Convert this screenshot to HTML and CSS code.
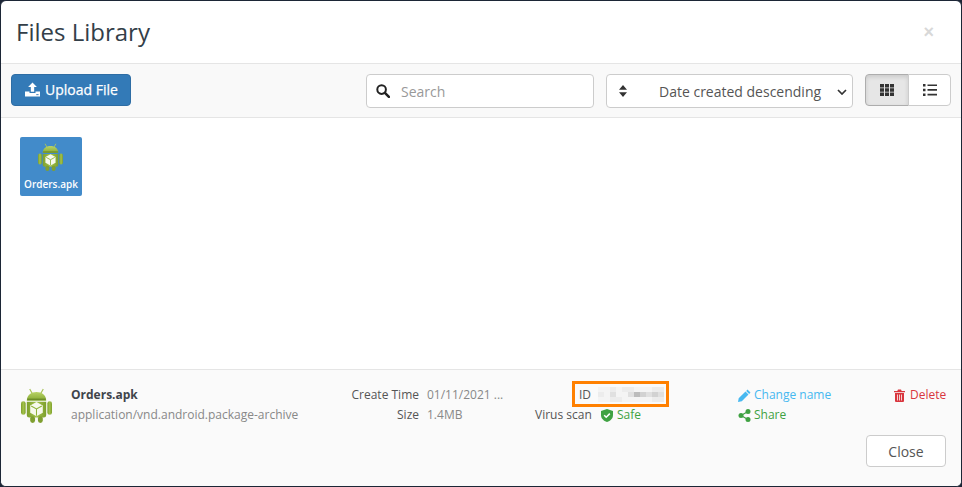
FILE: index.html
```html
<!DOCTYPE html>
<html lang="en">
<head>
<meta charset="utf-8">
<title>Files Library</title>
<link rel="stylesheet" href="styles.css">
</head>
<body>
<svg class="defs" width="0" height="0" aria-hidden="true">
  <defs>
    <linearGradient id="droid-head" x1="0" y1="0" x2="0" y2="1">
      <stop offset="0" stop-color="#b9d366"/>
      <stop offset="1" stop-color="#84a932"/>
    </linearGradient>
    <linearGradient id="droid-body" x1="0" y1="0" x2="1" y2="0">
      <stop offset="0" stop-color="#7d9f2c"/>
      <stop offset=".5" stop-color="#a3c24a"/>
      <stop offset="1" stop-color="#7d9f2c"/>
    </linearGradient>
  </defs>
  <symbol id="android" viewBox="0 0 32 36">
    <path d="M9 1l2.500 4.500M23 1l-2.500 4.500" stroke="#a9c45a" stroke-width="1.200" fill="none"/>
    <path d="M6 13C6 7 10.500 4 16 4s10 3 10 9z" fill="url(#droid-head)"/>
    <path d="M6.500 11.500h19" stroke="#5f7f22" stroke-width="1"/>
    <rect x="0" y="13.500" width="4.800" height="14" rx="2.400" fill="url(#droid-body)"/>
    <rect x="27.200" y="13.500" width="4.800" height="14" rx="2.400" fill="url(#droid-body)"/>
    <path d="M6 14h20v14a2.500 2.500 0 0 1-2.500 2.500h-15A2.500 2.500 0 0 1 6 28z" fill="url(#droid-body)"/>
    <rect x="9.500" y="29" width="5" height="7" rx="2.500" fill="#7f9f30"/>
    <rect x="17.500" y="29" width="5" height="7" rx="2.500" fill="#7f9f30"/>
    <path d="M16 14.500l6.500 3.500v7.500L16 29l-6.500-3.500V18z" fill="#f7f9ec"/>
    <path d="M10.500 18.500l5.500 3 5.500-3M16 21.500v7" stroke="#8fb339" stroke-width="1.100" fill="none"/>
  </symbol>
</svg>
<main class="modal">
  <header class="modal-head">
    <h1 class="title">Files Library</h1>
    <span class="dismiss">×</span>
  </header>
  <section class="toolbar">
    <button class="btn-upload" type="button">
      <svg class="ico-upload" viewBox="0 0 16 15"><path d="M8 0l4.700 4.900H9.800v5H6.200v-5H3.300zM0 9.500h4.800v1.700h6.400V9.500H16V15H0z" fill="#fff"/><path d="M12 13h2.500" stroke="#337ab7" stroke-width="1"/></svg>
      Upload File
    </button>
    <div class="tools-right">
      <label class="search">
        <svg class="ico-search" viewBox="0 0 14 14"><circle cx="5.600" cy="5.600" r="4.300" fill="none" stroke="#222" stroke-width="2"/><path d="M8.900 8.900l4 4" stroke="#222" stroke-width="2.500" stroke-linecap="round"/></svg>
        <span class="placeholder">Search</span>
      </label>
      <div class="sort">
        <svg class="ico-sort" viewBox="0 0 8 12"><path d="M4 0l4 4.700H0zM4 12L0 7.300h8z" fill="#333"/></svg>
        <span class="sort-label">Date created descending</span>
        <svg class="ico-chev" viewBox="0 0 10 6"><path d="M1 1l4 4 4-4" fill="none" stroke="#333" stroke-width="1.700"/></svg>
      </div>
      <div class="view-group">
        <span class="view view-on">
          <svg class="ico-view" viewBox="0 0 14 12"><path d="M0 0h4v3.400H0zM5 0h4v3.400H5zM10 0h4v3.400h-4zM0 4.300h4v3.400H0zM5 4.300h4v3.400H5zM10 4.300h4v3.400h-4zM0 8.600h4V12H0zM5 8.600h4V12H5zM10 8.600h4V12h-4z" fill="#333"/></svg>
        </span>
        <span class="view">
          <svg class="ico-view" viewBox="0 0 14 12"><path d="M0 0h2.500v2.500H0zM0 4.700h2.500v2.500H0zM0 9.400h2.500v2.500H0zM4.500 .4H14v1.700H4.500zM4.500 5.100H14v1.700H4.500zM4.500 9.800H14v1.700H4.500z" fill="#333"/></svg>
        </span>
      </div>
    </div>
  </section>
  <section class="files">
    <article class="file-tile">
      <svg class="tile-icon"><use href="#android"/></svg>
      <span class="tile-name">Orders.apk</span>
    </article>
  </section>
  <footer class="details">
    <div class="info-row">
      <svg class="detail-icon"><use href="#android"/></svg>
      <div class="name-col">
        <div class="file-name">Orders.apk</div>
        <div class="file-type">application/vnd.android.package-archive</div>
      </div>
      <div class="meta-col">
        <div class="meta"><span class="meta-key">Create Time</span><span class="meta-val">01/11/2021 ...</span></div>
        <div class="meta"><span class="meta-key">Size</span><span class="meta-val">1.4MB</span></div>
      </div>
      <div class="id-col">
        <div class="id-box">
          <span class="id-key">ID</span>
          <svg class="id-blur" viewBox="0 0 11 3" preserveAspectRatio="none" shape-rendering="crispEdges">
            <rect width="11" height="3" fill="#f4f4f4"/>
            <path d="M0 1h1v1H0zM2 0h1v1H2zM2 2h2v1H2zM4 0h2v1H4zM9 0h2v1H9zM9 2h2v1H9z" fill="#ececec"/>
            <path d="M2 1h1v1H2zM5 1h1v1H5zM8 1h3v1H8z" fill="#e0e0e0"/>
            <path d="M7 1h1v1H7zM9 1h1v1H9z" fill="#d2d2d2"/>
            <path d="M6 1h1v1H6z" fill="#bcbcbc"/>
          </svg>
        </div>
        <div class="scan">
          <span class="scan-key">Virus scan</span>
          <svg class="ico-shield" viewBox="0 0 12 13"><path d="M6 0l6 2v4c0 3.500-2.500 5.800-6 7-3.500-1.200-6-3.500-6-7V2z" fill="#3fa242"/><path d="M3.200 6.200l2 2 3.600-3.600" fill="none" stroke="#fff" stroke-width="1.500"/></svg>
          <span class="safe">Safe</span>
        </div>
      </div>
      <div class="action-col">
        <a class="action action-blue">
          <svg class="ico-act" viewBox="0 0 13 13"><path d="M9.500.6l3 3-1.300 1.300-3-3zM7.500 2.600l3 3L3.800 12.300 0 13l.7-3.800z" fill="#46b8f0"/></svg>Change name</a>
        <a class="action action-green">
          <svg class="ico-act" viewBox="0 0 12 13"><circle cx="2.500" cy="6.500" r="2.500" fill="#3fa242"/><circle cx="9.500" cy="2.500" r="2.500" fill="#3fa242"/><circle cx="9.500" cy="10.500" r="2.500" fill="#3fa242"/><path d="M2.500 6.500l7-4M2.500 6.500l7 4" stroke="#3fa242" stroke-width="1.300"/></svg>Share</a>
      </div>
      <a class="action action-red">
        <svg class="ico-trash" viewBox="0 0 11 13"><path d="M0 2h3.300L4 .5h3L7.700 2H11v1.300H0zM1 4h9v8a1 1 0 0 1-1 1H2a1 1 0 0 1-1-1z" fill="#d9363e"/><path d="M3.500 5.500v6M5.500 5.500v6M7.500 5.500v6" stroke="#fafafa" stroke-width=".8"/></svg>Delete</a>
    </div>
    <div class="foot-actions"><button class="btn-close" type="button">Close</button></div>
  </footer>
</main>
</body>
</html>
```
FILE: styles.css
```css
* { box-sizing: border-box; }
html, body { height: 100%; }
body {
  margin: 0;
  font-family: "Open Sans", "Liberation Sans", sans-serif;
  font-size: 12px;
  color: #555;
  background: #1c2636;
}
.defs { display: block; height: 0; }
.modal {
  height: 487px;
  display: flex;
  flex-direction: column;
  margin: 0;
  background: #fff;
  border: 1px solid #1c2636;
  border-radius: 6px;
  overflow: hidden;
}
.modal-head {
  height: 63px;
  flex: none;
  display: flex;
  align-items: center;
  justify-content: space-between;
  padding: 0 27px 0 15px;
  border-bottom: 1px solid #e5e5e5;
}
.title {
  margin: 0;
  font-size: 24px;
  font-weight: 400;
  line-height: 34px;
  color: #333e48;
}
.dismiss {
  font-family: "Liberation Sans", sans-serif;
  font-size: 18px;
  font-weight: 700;
  color: #d8d8d8;
  line-height: 20px;
}
.toolbar {
  height: 54px;
  flex: none;
  display: flex;
  align-items: flex-start;
  justify-content: space-between;
  padding: 10px 10px 0;
  background: #f9f9f9;
  border-bottom: 1px solid #e5e5e5;
}
.btn-upload {
  width: 120px;
  height: 32px;
  padding: 0 0 2px 13px;
  display: flex;
  align-items: center;
  gap: 5px;
  font: 500 14px "Open Sans", sans-serif;
  -webkit-text-stroke: .25px #fff;
  color: #fff;
  background: #337ab7;
  border: 1px solid #2e6da4;
  border-radius: 4px;
}
.ico-upload { width: 15px; height: 15px; }
.tools-right { display: flex; gap: 12px; }
.search {
  width: 228px;
  height: 34px;
  display: flex;
  align-items: center;
  gap: 11px;
  padding-left: 9px;
  background: #fff;
  border: 1px solid #ccc;
  border-radius: 4px;
}
.ico-search { width: 14px; height: 14px; margin-top: -1px; }
.placeholder { font-size: 14px; color: #999; }
.sort {
  width: 247px;
  height: 34px;
  display: flex;
  align-items: center;
  padding: 0 5px 0 12px;
  background: #fff;
  border: 1px solid #ccc;
  border-radius: 4px;
}
.ico-sort { width: 8px; height: 12px; }
.sort-label {
  margin-left: 32px;
  font-size: 14px;
  color: #555;
  white-space: nowrap;
}
.ico-chev { width: 10px; height: 6px; margin-left: auto; margin-top: 2px; }
.view-group { display: flex; margin-left: 0; }
.view {
  width: 43px;
  height: 32px;
  display: flex;
  align-items: center;
  justify-content: center;
  background: #fff;
  border: 1px solid #ccc;
  border-radius: 0 4px 4px 0;
  margin-left: -1px;
  padding-bottom: 1px;
}
.view-on {
  width: 44px;
  margin-left: 0;
  background: #e6e6e6;
  border-color: #adadad;
  border-radius: 4px 0 0 4px;
  box-shadow: inset 0 2px 4px rgba(0, 0, 0, .125);
}
.ico-view { width: 14px; height: 12px; }
.files {
  flex: 1;
  padding: 19px;
}
.file-tile {
  width: 62px;
  height: 59px;
  display: flex;
  flex-direction: column;
  align-items: center;
  padding-top: 6px;
  background: #428bca;
  border-radius: 2px;
}
.tile-icon { width: 25px; height: 28px; display: block; margin-left: -2px; }
.tile-name {
  margin-top: 7px;
  font-size: 10px;
  font-weight: 600;
  color: #fff;
  line-height: 13px;
  white-space: nowrap;
}
.details {
  height: 117px;
  flex: none;
  padding: 11px 15px 0 18px;
  background: #fafafa;
  border-top: 1px solid #e5e5e5;
}
.info-row { display: flex; align-items: flex-start; }
.detail-icon { width: 31px; height: 35px; margin: 7px 0 0 2px; flex: none; }
.name-col { width: 280px; margin-left: 19px; padding-top: 4px; flex: none; }
.file-name { font-weight: 700; color: #3f444a; line-height: 20px; }
.file-type { color: #888; line-height: 20px; }
.meta-col { width: 152px; flex: none; padding-top: 4px; }
.meta { display: flex; line-height: 20px; }
.meta-key { width: 68px; text-align: right; color: #555; flex: none; }
.meta-val { margin-left: 8px; color: #888; white-space: nowrap; }
.id-col { width: 176px; flex: none; margin-left: 59px; }
.id-box {
  width: 97px;
  height: 26px;
  margin-left: 10px;
  display: flex;
  align-items: center;
  gap: 7px;
  padding: 1px 0 0 4px;
  border: 3px solid #ff8000;
  color: #555;
}
.id-key { line-height: 20px; }
.id-blur { width: 66px; height: 15px; margin-top: -1px; }
.scan {
  display: flex;
  align-items: center;
  line-height: 20px;
  margin-top: -2px;
}
.scan-key { width: 56px; text-align: right; margin-left: -27px; white-space: nowrap; flex: none; }
.ico-shield { width: 12px; height: 13px; margin-left: 10px; margin-right: 4px; }
.safe { color: #3fa242; }
.action-col { width: 156px; flex: none; padding-top: 4px; }
.action {
  display: flex;
  align-items: center;
  line-height: 20px;
  white-space: nowrap;
}
.action-blue { color: #46b8f0; }
.action-green { color: #3fa242; }
.action-red { color: #d9363e; padding-top: 4px; }
.ico-act { width: 13px; height: 13px; margin-right: 3px; }
.ico-trash { width: 11px; height: 13px; margin-right: 5px; }
.foot-actions { display: flex; justify-content: flex-end; margin-top: 10px; }
.btn-close {
  width: 80px;
  height: 32px;
  font: 14px "Open Sans", sans-serif;
  color: #555;
  background: #fff;
  border: 1px solid #ccc;
  border-radius: 4px;
}
```
